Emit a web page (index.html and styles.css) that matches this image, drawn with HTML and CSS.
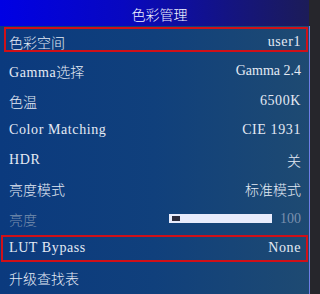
FILE: index.html
```html
<!DOCTYPE html>
<html lang="zh">
<head>
<meta charset="utf-8">
<link rel="stylesheet" href="styles.css">
</head>
<body>
<div class="panel">
  <div class="header"><span class="zh">色彩管理</span></div>
  <div class="list">
    <div class="row selected first"><span class="zh">色彩空间</span><span>user1</span></div>
    <div class="row"><span>Gamma<span class="zh">选择</span></span><span class="tight">Gamma 2.4</span></div>
    <div class="row"><span class="zh">色温</span><span>6500K</span></div>
    <div class="row"><span>Color Matching</span><span>CIE 1931</span></div>
    <div class="row"><span>HDR</span><span class="zh">关</span></div>
    <div class="row"><span class="zh">亮度模式</span><span class="zh">标准模式</span></div>
    <div class="row dim"><span class="zh">亮度</span>
      <span class="slider"><span class="track"><span class="thumb"></span></span><span class="num">100</span></span>
    </div>
    <div class="row selected wide"><span>LUT Bypass</span><span>None</span></div>
    <div class="row"><span class="zh">升级查找表</span><span></span></div>
  </div>
</div>
</body>
</html>
```
FILE: styles.css
```css
html, body {
  margin: 0;
  padding: 0;
}
body {
  width: 314px;
  height: 294px;
  background: #26262c;
  overflow: hidden;
  font-family: "Liberation Serif", "Noto Sans CJK SC", serif;
  font-size: 14px;
  letter-spacing: 0.6px;
  color: #e4eaf4;
}
.zh {
  font-family: "Noto Sans CJK SC", sans-serif;
  font-size: 14px;
  font-weight: 300;
  letter-spacing: 0;
}
.tight {
  letter-spacing: 0;
}
.panel {
  width: 310px;
  height: 294px;
  display: flex;
  flex-direction: column;
}
.header {
  width: 309px;
  height: 26px;
  display: flex;
  align-items: center;
  justify-content: center;
  padding: 1px 0 0 10px;
  box-sizing: border-box;
  background: linear-gradient(90deg, #0000e4 0%, #0808c0 40%, #141480 75%, #1c1c58 100%);
  color: #f0f2ff;
}
.list {
  flex: 1;
  width: 309px;
  border-right: 1px solid #6f7fe6;
  background: linear-gradient(90deg, #0b3a7e 0%, #10407c 50%, #1e4a72 100%);
}
.row {
  position: relative;
  height: 29.5px;
  display: flex;
  align-items: center;
  justify-content: space-between;
  padding: 2px 8px 0 9px;
  box-sizing: border-box;
}
.row.selected::after {
  content: "";
  position: absolute;
  right: 1px;
  border: 2px solid #d01018;
  box-sizing: border-box;
}
.row.first::after {
  top: 1px;
  height: 25px;
  left: 4px;
}
.row.wide::after {
  top: 2.5px;
  height: 27px;
  left: 1px;
}
.row.dim {
  color: #7a90ae;
}
.slider {
  display: flex;
  align-items: center;
  gap: 8px;
}
.track {
  width: 103px;
  height: 9px;
  background: #e8ecfc;
  display: flex;
  align-items: center;
  padding-left: 3px;
  box-sizing: border-box;
}
.thumb {
  width: 8px;
  height: 5px;
  background: #2c2c3c;
}
.num {
  color: #7a90ae;
  letter-spacing: 0;
}
```
